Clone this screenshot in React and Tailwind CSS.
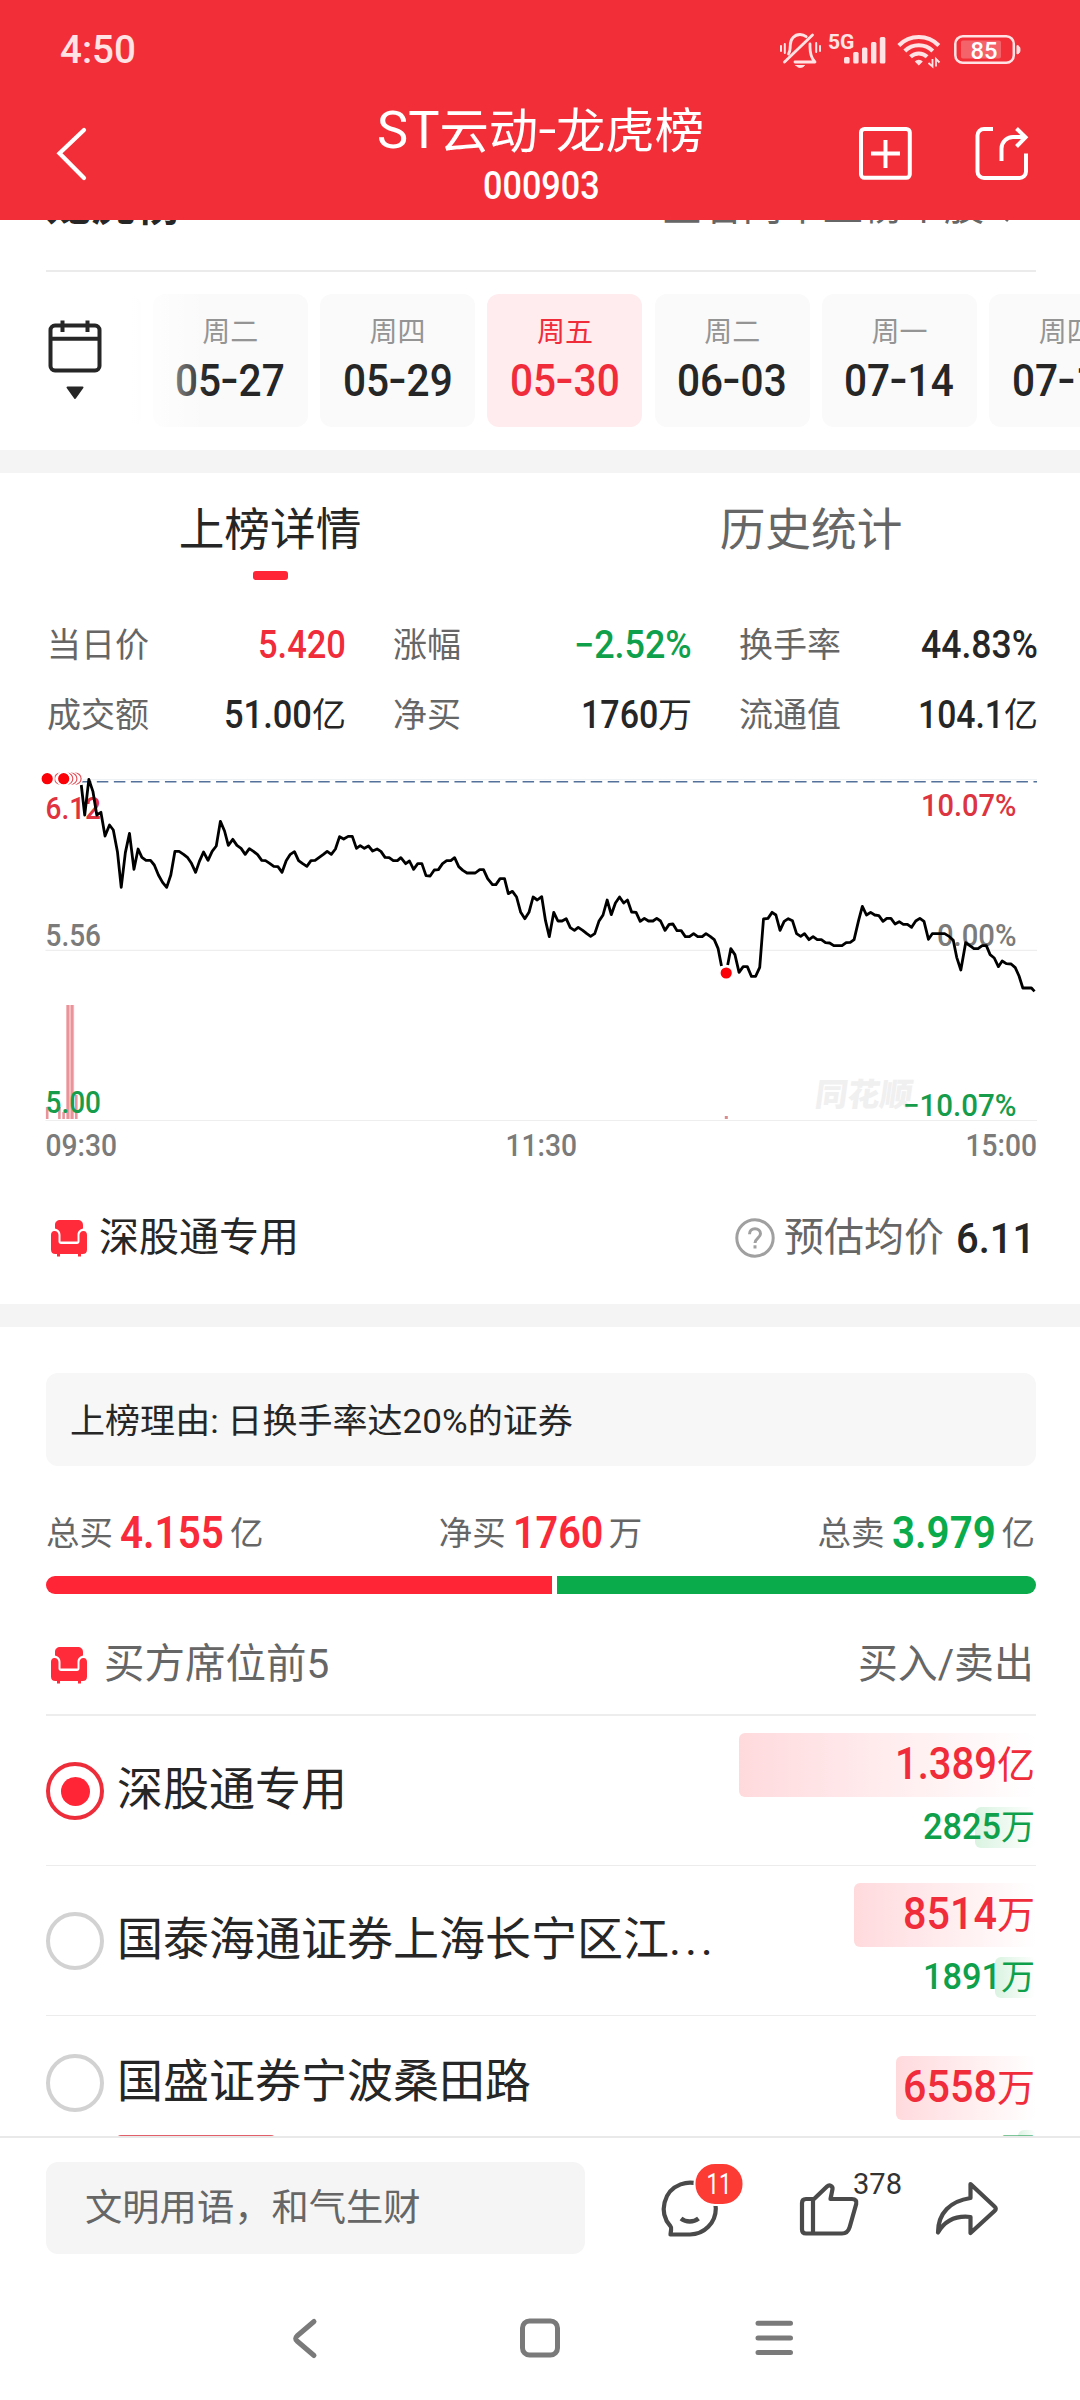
import { useLayoutEffect, useRef, useState } from "react";

/* Text squeezed or stretched horizontally so that it fills exactly w pixels. */
function Fit({ w, className = "", children }) {
  const ref = useRef(null);
  const [scale, setScale] = useState(1);
  useLayoutEffect(() => {
    setScale(w / ref.current.offsetWidth);
  }, [w]);
  return (
    <span className={"inline-block shrink-0 whitespace-nowrap " + className} style={{ width: w }}>
      <span ref={ref} className="inline-block origin-left" style={{ transform: `scaleX(${scale})` }}>
        {children}
      </span>
    </span>
  );
}

/* Hyphen raised and widened to sit at digit mid-height. */
function Dash() {
  return <span className="mx-[2px] inline-block -translate-y-[2px] scale-x-130">-</span>;
}

function StatusIcons() {
  return (
    <svg className="h-[40px] w-[250px]" viewBox="775 30 250 40" fill="none" stroke="#ffe3e4">
      <g strokeWidth="2.8" strokeLinecap="round" strokeLinejoin="round">
        <path d="M788.5 54c1.8-3 1.8-6 1.8-9 0-6 4.200-10.500 9.700-10.500 2.500 0 4.500.8 6.200 2.200" />
        <path d="M810 44v3c0 7 1 11 5 15h-20" />
        <path d="M812.500 35l-28 27" />
        <path d="M781 46v5M784.800 44v9M820 46v5M816.200 43v9" strokeWidth="2" />
        <path d="M796 65.500h8.500c-2 2.600-6.500 2.600-8.500 0z" fill="#ffe3e4" strokeWidth="1" />
      </g>
      <text x="828" y="48.500" fontFamily="Roboto, sans-serif" fontWeight="700" fontSize="20.500" fill="#ffe3e4" stroke="none" textLength="26.500" lengthAdjust="spacingAndGlyphs">5G</text>
      <g fill="#ffe3e4" stroke="none">
        <rect x="844" y="57" width="5.600" height="6.500" rx="1.500" />
        <rect x="853.200" y="52" width="5.400" height="11.500" rx="1.500" />
        <rect x="862" y="47.500" width="5.400" height="16" rx="1.500" />
        <rect x="871" y="42" width="5.400" height="21.500" rx="1.500" />
        <rect x="879.800" y="37" width="5.600" height="26.500" rx="1.500" />
      </g>
      <g strokeWidth="4">
        <path d="M898.800 45.500a28 28 0 0 1 40 0" />
        <path d="M904.800 51a20 20 0 0 1 28 0" />
        <path d="M910.500 56.800a12 12 0 0 1 16.600 0" />
      </g>
      <path d="M914.800 61.500a5.600 5.600 0 0 1 8 0l-4 4z" fill="#ffe3e4" stroke="none" />
      <path d="M932.500 59v7.500l-4-3.500M936 66.500V59l3.500 3.500" strokeWidth="1.800" />
      <rect x="955.300" y="36.300" width="58.500" height="26.500" rx="7.500" strokeWidth="2.500" />
      <rect x="961" y="40.500" width="40" height="18" rx="2" fill="#ffffff" fillOpacity=".25" stroke="none" />
      <path d="M1017 45.500c2.500.5 3 2 3 4.200s-.5 3.800-3 4.200z" fill="#ffe3e4" strokeWidth="1" />
      <text x="970.500" y="59" fontFamily="Roboto, sans-serif" fontWeight="500" fontSize="24.500" fill="#ffffff" stroke="none" textLength="27" lengthAdjust="spacingAndGlyphs">85</text>
    </svg>
  );
}

function Header() {
  return (
    <header className="h-[220px] shrink-0 bg-[#f22f38] text-white">
      <div className="flex h-[99px] items-center justify-between pl-[60px] pr-[55px] pt-[1px]">
        <Fit w={76} className="text-[38px] font-medium text-[#ffe3e4]">4:50</Fit>
        <StatusIcons />
      </div>
      <div className="grid h-[121px] grid-cols-[340px_1fr_340px]">
        <svg className="ml-[50px] mt-[24px] h-[60px] w-[44px]" viewBox="50 123 44 60" fill="none" stroke="#fff" strokeWidth="4.200" strokeLinecap="round">
          <path d="M84 130L59.500 153.300 84 178" />
        </svg>
        <div className="flex flex-col items-center pt-[4px]">
          <Fit w={327} className="text-[48px] font-normal leading-[56px]">
            <span className="text-[51px]">ST</span>云动<Dash />龙虎榜
          </Fit>
          <Fit w={117} className="ml-[2px] mt-[6px] text-[38px] font-medium leading-[40px]">000903</Fit>
        </div>
        <svg className="ml-[110px] mt-[24px] h-[60px] w-[190px]" viewBox="850 123 190 60" fill="none" stroke="#fff" strokeWidth="4">
          <rect x="861" y="129" width="48.800" height="48.800" rx="3.500" />
          <path d="M885.500 140v28M871 153.500h29" />
          <path d="M993 129h-9a6.500 6.500 0 0 0-6.500 6.500v36a6.500 6.500 0 0 0 6.500 6.500h35.500a6.500 6.500 0 0 0 6.500-6.500V153.500" />
          <path d="M1001.500 161v-12.500a11.500 11.500 0 0 1 11.500-11.500h12" />
          <path d="M1016.500 128.500l9 8.700-9 9.300" />
        </svg>
      </div>
    </header>
  );
}

const DATES = [
  { day: "周一", date: ["05", "26"] },
  { day: "周二", date: ["05", "27"] },
  { day: "周四", date: ["05", "29"] },
  { day: "周五", date: ["05", "30"], active: true },
  { day: "周二", date: ["06", "03"] },
  { day: "周一", date: ["07", "14"] },
  { day: "周四", date: ["07", "17"] },
];

function DateStrip() {
  return (
    <div className="flex h-[178px] items-start overflow-hidden">
      <svg className="z-10 mt-[42px] h-[90px] w-[60px] shrink-0 ml-[45px]" viewBox="45 314 60 90" fill="none" stroke="#262626" strokeWidth="4">
        <rect x="50.500" y="325.500" width="49" height="45" rx="4.500" />
        <path d="M50.500 338.700h49M62.500 320.500v11.500M87.500 320.500v11.500" />
        <path d="M67.500 387.500h15l-7.500 10.500z" fill="#262626" strokeWidth="2" strokeLinejoin="round" />
      </svg>
      <div className="relative mt-[22px] h-[133px] w-[975px] overflow-hidden">
        <div className="ml-[-119.500px] flex gap-[12.300px]">
          {DATES.map((d, i) => (
            <div
              key={i}
              className={
                "flex h-[133px] w-[155px] shrink-0 flex-col items-center rounded-[12px] pt-[22px] " +
                (d.active ? "bg-[#ffecee] text-[#f02b3a]" : "bg-[#fafafa] text-[#262626]")
              }
            >
              <span className={"text-[28px] leading-[33px] " + (d.active ? "" : "text-[#949494]")}>{d.day}</span>
              <Fit w={110} className="mt-[10px] text-[43.500px] font-medium leading-[45px]">
                {d.date[0]}<Dash />{d.date[1]}
              </Fit>
            </div>
          ))}
        </div>
        <div className="absolute left-0 top-0 h-full w-[102px] bg-gradient-to-r from-white from-25% to-transparent" />
      </div>
    </div>
  );
}

const STATS = [
  { label: "当日价", num: "5.420", w: 88, tone: "text-[#f02b3a]" },
  { label: "涨幅", num: "−2.52%", w: 118, tone: "text-[#0fa04c]" },
  { label: "换手率", num: "44.83%", w: 117, tone: "text-[#262626]" },
  { label: "成交额", num: "51.00", unit: "亿", w: 88, tone: "text-[#262626]" },
  { label: "净买", num: "1760", unit: "万", w: 77, tone: "text-[#262626]" },
  { label: "流通值", num: "104.1", unit: "亿", w: 86, tone: "text-[#262626]" },
];

function Stats() {
  return (
    <div className="mt-[31px] grid grid-cols-[300px_300px_300px] gap-x-[46px] pl-[46px]">
      {STATS.map((s) => (
        <div key={s.label} className="flex h-[70px] items-center justify-between">
          <span className="ml-[1px] text-[34px] text-[#666]">{s.label}</span>
          <span className={"flex items-center font-medium " + s.tone}>
            <Fit w={s.w} className="text-[38px]">{s.num}</Fit>
            {s.unit && <span className="text-[34px] font-normal">{s.unit}</span>}
          </span>
        </div>
      ))}
    </div>
  );
}

/* Intraday price polyline on a 3136 x 1290 grid, in two runs around the marked trade. */
const LINE_A =
  "236,105 246,195 258,88 270,125 281,195 293,187 305,258 318,225 329,240 341,305 352,412 364,308 376,250 389,358 401,297 412,322 424,331 437,331 448,345 460,375 472,397 484,412 496,375 508,304 520,304 533,313 545,323 556,340 568,367 579,334 591,306 604,331 616,304 628,288 640,214 652,243 663,286 676,268 688,286 700,295 712,313 724,296 736,304 748,314 760,331 771,332 783,340 795,349 807,350 819,367 831,332 843,313 855,305 867,332 879,341 891,349 903,332 915,331 927,322 939,313 950,304 962,313 974,297 986,260 998,267 1011,259 1023,259 1035,295 1046,287 1058,295 1070,288 1082,303 1095,297 1106,304 1118,322 1130,323 1142,332 1154,332 1164,323 1178,341 1189,333 1201,358 1213,341 1225,341 1237,377 1249,378 1261,360 1273,359 1285,341 1297,332 1309,332 1320,323 1332,350 1344,361 1356,369 1380,369 1393,359 1404,359 1416,386 1430,404 1440,404 1452,386 1465,386 1476,431 1488,424 1500,441 1512,487 1524,506 1536,487 1548,441 1560,450 1573,440 1584,512 1595,560 1608,487 1620,513 1632,513 1644,506 1656,533 1668,541 1679,532 1692,541 1704,551 1715,559 1727,551 1739,514 1751,495 1763,450 1775,494 1787,459 1799,441 1811,459 1822,450 1834,486 1847,487 1859,514 1871,505 1883,513 1896,513 1907,505 1918,513 1931,541 1943,523 1954,522 1966,542 1978,542 1990,560 2002,560 2014,551 2026,560 2039,560 2050,551 2062,559 2074,569 2085,595 2095,648";
const LINE_B =
  "2113,645 2122,596 2134,614 2146,667 2158,650 2170,650 2182,679 2194,679 2206,652 2217,507 2230,505 2242,487 2253,495 2265,541 2277,514 2289,506 2301,512 2313,551 2325,559 2336,551 2349,569 2361,560 2373,569 2385,569 2397,578 2409,579 2421,587 2445,587 2457,578 2469,577 2480,569 2493,512 2504,469 2516,495 2528,487 2540,495 2552,497 2564,514 2575,505 2587,505 2599,522 2611,515 2623,523 2635,523 2647,532 2659,513 2671,505 2683,514 2696,568 2707,551 2743,551 2757,560 2768,571 2778,622 2790,660 2804,578 2816,587 2828,596 2840,596 2852,587 2864,587 2875,614 2887,624 2899,650 2910,633 2922,641 2936,642 2948,653 2959,678 2970,714 2995,714 3004,724";

const BARS = [
  [47.2, 1107], [59.4, 1107], [63.6, 1112], [67.900, 1005], [72.100, 1005], [76.300, 1095],
];

const LABELS = [
  { t: "5.56", x: 45.500, y: 945.500, w: 55.500, fill: "#7b7b7b" },
  { t: "5.00", x: 45.500, y: 1112.500, w: 55.500, fill: "#179c4c" },
  { t: "6.12", x: 45.500, y: 819, w: 55.500, fill: "#e0323f" },
  { t: "10.07%", x: 921, y: 816, w: 95.500, fill: "#dc3440" },
  { t: "0.00%", x: 937, y: 945.500, w: 79.500, fill: "#7b7b7b" },
  { t: "−10.07%", x: 903, y: 1116, w: 113.500, fill: "#179c4c" },
  { t: "09:30", x: 45.500, y: 1155.500, w: 71.500, fill: "#7b7b7b" },
  { t: "11:30", x: 505.500, y: 1155.500, w: 71.500, fill: "#7b7b7b" },
  { t: "15:00", x: 965.500, y: 1155.500, w: 71.500, fill: "#7b7b7b" },
];

function Chart() {
  return (
    <svg className="block h-[430px] w-[1080px]" viewBox="0 750 1080 430">
      <path d="M45.500 779.700H1037" stroke="#eceff3" strokeWidth="1" />
      <path d="M45.500 950.300H1037M45.500 1120.500H1037" stroke="#eeeeee" strokeWidth="1.200" />
      <path d="M79.800 781.700H1037" stroke="#54719c" strokeWidth="1.500" strokeDasharray="11.500 5.530" />
      <rect x="66.200" y="1005" width="8" height="114" fill="#fbc6ca" />
      {BARS.map(([x, y]) => (
        <rect key={x} x={x - 1.3} y={y} width="2.600" height={1119 - y} fill="#e8949a" />
      ))}
      <rect x="724.800" y="1116" width="3" height="3" fill="#d98d8d" />
      <text x="814" y="1106" transform="translate(814 1106) skewX(-8) translate(-814 -1106)" fontFamily="'Noto Sans CJK SC', sans-serif" fontWeight="900" fontSize="32" fill="#f0f0f0" textLength="97" lengthAdjust="spacingAndGlyphs">同花顺</text>
      {LABELS.map((l) => (
        <text key={l.t} x={l.x} y={l.y} fontFamily="Roboto, sans-serif" fontWeight="500" fontSize="30.500" fill={l.fill} textLength={l.w} lengthAdjust="spacingAndGlyphs">{l.t}</text>
      ))}
      <svg x="0" y="750" width="1080" height="430" viewBox="0 0 3136 1290" preserveAspectRatio="none" fill="none" stroke="#000" strokeWidth="2.800" strokeLinejoin="round">
        <polyline points={LINE_A} vectorEffect="non-scaling-stroke" />
        <polyline points={LINE_B} vectorEffect="non-scaling-stroke" />
      </svg>
      <g stroke="#e8505a" strokeWidth="1.200">
        {[75.5, 71.3, 67.2, 60.2].map((x) => (
          <g key={x}>
            <circle cx={x} cy="778.700" r="7.500" fill="#fff" stroke="none" />
            <circle cx={x} cy="778.700" r="5.600" fill="#fff" />
          </g>
        ))}
      </g>
      <g fill="#fa0207" stroke="#fff" strokeWidth="2">
        <circle cx="63.700" cy="778.700" r="6.600" />
        <circle cx="47.200" cy="778.700" r="6.600" />
        <circle cx="726.200" cy="973" r="6.600" />
      </g>
    </svg>
  );
}

function Sofa() {
  return (
    <svg className="h-[38px] w-[38px] shrink-0" viewBox="0 0 38 38" fill="#ff2a3a">
      <path d="M10.500 1h17c3.500 0 5.500 2 5.500 5v3.500c-4 1-5.500 3.500-5.500 6.500v6.500h-17V16c0-3-1.500-5.500-5.500-6.500V6c0-3 2-5 5.500-5z" />
      <path d="M4.500 12C7 12 8.500 13.800 8.500 16v6.500c0 1.500 1 2.500 2.500 2.500h16c1.500 0 2.500-1 2.500-2.500V16c0-2.200 1.500-4 4-4S37 13.800 37 16v14.500c0 3-1.500 4.500-4.500 4.500H31v2.500h-3V35H10v2.500H7V35H5.500C2.500 35 1 33.500 1 30.500V16c0-2.200 1-4 3.500-4z" />
    </svg>
  );
}

function SeatSummary() {
  return (
    <div className="flex h-[116px] items-center justify-between pl-[50px] pr-[45px]">
      <div className="flex items-center gap-[11px]">
        <Sofa />
        <span className="text-[40px] text-[#262626]">深股通专用</span>
      </div>
      <div className="flex items-center">
        <svg className="mr-[8px] h-[42px] w-[42px]" viewBox="0 0 42 42" fill="none" stroke="#a0a0a0" strokeWidth="3">
          <circle cx="21" cy="21" r="18.200" />
          <path d="M15.500 17.200c0-3.400 2.400-5.500 5.500-5.500s5.500 2 5.500 5c0 4.200-5.500 4.600-5.500 9.300" />
          <path d="M21 28.300v3.200" />
        </svg>
        <span className="text-[40px] text-[#666]">预估均价</span>
        <Fit w={79} className="ml-[12px] text-[43px] font-medium text-[#262626]">6.11</Fit>
      </div>
    </div>
  );
}

function Total({ label, num, w, unit, tone }) {
  return (
    <div className="flex items-center text-[33.500px] text-[#666]">
      <span>{label}</span>
      <Fit w={w} className={"ml-[7px] mr-[6px] text-[43.500px] font-semibold " + tone}>{num}</Fit>
      <span>{unit}</span>
    </div>
  );
}

const SEATS = [
  { name: "深股通专用", on: true, buy: "1.389", buyUnit: "亿", buyW: 102, buyBar: 297, sell: "2825", sellW: 78, sellBar: 61 },
  { name: "国泰海通证券上海长宁区江", cut: true, buy: "8514", buyUnit: "万", buyW: 94, buyBar: 182, sell: "1891", sellW: 78, sellBar: 41 },
  { name: "国盛证券宁波桑田路", buy: "6558", buyUnit: "万", buyW: 94, buyBar: 140, sell: "1515", sellW: 81, sellBar: 18, tag: true },
];

function Seat({ s }) {
  return (
    <div className={"ml-[46px] mr-[44px] flex items-start justify-between border-b border-[#ececec] " + (s.tag ? "h-[196px] pt-[40px]" : "h-[150px] pt-[17px]")}>
      <div className={"flex items-start " + (s.tag ? "-mt-[2px]" : "mt-[29px]")}>
        <span className={"flex h-[58px] w-[58px] items-center justify-center rounded-full " + (s.on ? "border-[4px] border-[#ee2d3b]" : "border-[4px] border-[#d2d2d2]")}>
          {s.on && <span className="h-[29px] w-[29px] rounded-full bg-[#ff2436]" />}
        </span>
        <div className="ml-[13px] flex flex-col">
          <span className="h-[58px] whitespace-nowrap text-[46px] leading-[54px] text-[#262626]">
            {s.name}
            {s.cut && <span className="tracking-[3.800px]">...</span>}
          </span>
          {s.tag && <span className="mt-[23px] h-[40px] w-[158px] rounded-[4px] border border-t-2 border-[#e2606a]" />}
        </div>
      </div>
      <div className="flex w-[300px] flex-col items-end">
        <div className="relative flex h-[64px] w-full items-center justify-end pr-[1px] text-[#f02b3a]">
          <span className="absolute right-0 top-0 h-full rounded-[6px] bg-gradient-to-r from-[#ffdadd] to-white" style={{ width: s.buyBar }} />
          <Fit w={s.buyW} className="relative text-[43.500px] font-medium">{s.buy}</Fit>
          <span className="relative text-[38px]">{s.buyUnit}</span>
        </div>
        <div className="relative mt-[10px] flex h-[41px] w-full items-center justify-end pb-[2px] pr-[1px] text-[#0fa04c]">
          <span className="absolute right-0 top-0 h-full rounded-[6px] bg-gradient-to-r from-[#daf3e1] to-white" style={{ width: s.sellBar }} />
          <Fit w={s.sellW} className="relative text-[37px] font-medium">{s.sell}</Fit>
          <span className="relative text-[34px]">万</span>
        </div>
      </div>
    </div>
  );
}

function BottomBar() {
  return (
    <footer className="h-[264px] shrink-0 border-t-2 border-[#e9e9e9] bg-white">
      <div className="flex h-[140px] items-center pl-[46px]">
        <div className="flex h-[92px] w-[539px] items-center rounded-[12px] bg-[#f5f5f5] pl-[39px] pt-[2px] text-[37.300px] text-[#666]">文明用语，和气生财</div>
        <svg className="mb-[6px] ml-[65px] h-[90px] w-[380px]" viewBox="650 2160 380 90" fill="none" stroke="#4a4a4a" strokeWidth="4.200" strokeLinecap="round" strokeLinejoin="round">
          <path d="M670.500 2234.500h19.500a26 26 0 0 0 25.800-26 26 26 0 1 0-45.600 17.300c1.300 1.600 1.300 2.300.9 4z" />
          <path d="M681 2218.500c5 4 12.500 4 17.500 0" strokeWidth="4.500" strokeLinecap="butt" />
          <rect x="694.500" y="2163" width="49" height="42" rx="20.500" fill="#fb3b34" stroke="#fff" strokeWidth="2" />
          <text x="706.500" y="2194" fontFamily="Roboto, sans-serif" fontSize="30" fill="#fff" stroke="none" textLength="25" lengthAdjust="spacingAndGlyphs">11</text>
          <path d="M806 2199h8l13-12.500c2.500-2.300 6-.5 5.500 2.700l-2 9.800h21.500c3.500 0 5 2 4.200 5l-6.500 23c-1.200 4-3.500 6.500-7.700 6.500h-36c-2.500 0-4-1.500-4-4v-26.500c0-2.500 1.500-4 4-4zM813 2199.500v33.500" />
          <text x="853" y="2193.500" fontFamily="Roboto, sans-serif" fontSize="30" fill="#333" stroke="none" textLength="49" lengthAdjust="spacingAndGlyphs">378</text>
          <path d="M970.500 2184l24 22.500c1.700 1.600 1.700 2.900 0 4.500l-24 22v-16c-14-1.500-25.500 3.500-32.500 15.500 0-19.500 12.500-31.500 32.500-34.500z" />
        </svg>
      </div>
      <div className="flex h-[122px] items-center justify-center pb-[2px]">
        <svg className="h-[50px] w-[520px]" viewBox="280 2313 520 50" fill="none" stroke="#7a7a7a" strokeWidth="5" strokeLinecap="round" strokeLinejoin="round">
          <path d="M314 2321.500l-17 14.500c-1.800 1.700-1.800 3.300 0 5l17 14.500" />
          <rect x="522.500" y="2321" width="35" height="34" rx="7" />
          <path d="M758 2323.300h32.500M758 2338h32.500M758 2352.500h32.500" />
        </svg>
      </div>
    </footer>
  );
}

export default function App() {
  return (
    <div className="flex h-[2400px] w-[1080px] flex-col overflow-hidden bg-white font-[Roboto,'Noto_Sans_CJK_SC',sans-serif] leading-none">
      <Header />
      <main className="h-[1916px] shrink-0 overflow-hidden">
        <div className="ml-[46px] mr-[44px] flex h-[52px] items-start justify-between border-b-2 border-[#ebebeb]">
          <span className="mt-[-37px] text-[45px] font-semibold text-[#262626]">龙虎榜</span>
          <span className="-mt-[33px] flex items-center text-[40.300px] text-[#666]">
            查看两市上榜个股
            <svg className="ml-[19px] mr-[17px] mt-[4px] h-[26px] w-[16px]" viewBox="0 0 16 26" fill="none" stroke="#666" strokeWidth="3"><path d="M3 1l10 12L3 25" /></svg>
          </span>
        </div>
        <DateStrip />
        <div className="h-[23px] bg-[#f4f4f4]" />
        <div className="flex h-[106px] justify-around pt-[34px] text-[45.700px]">
          <div className="flex w-1/2 flex-col items-center">
            <span className="leading-[48px] text-[#262626]">上榜详情</span>
            <span className="mt-[16px] h-[9px] w-[35px] shrink-0 rounded-[3px] bg-[#ff2436]" />
          </div>
          <div className="w-1/2 pl-[2px] text-center leading-[48px] text-[#666]">历史统计</div>
        </div>
        <Stats />
        <Chart />
        <SeatSummary />
        <div className="mt-[8px] h-[23px] bg-[#f4f4f4]" />
        <div className="ml-[46px] mr-[44px] mt-[46px] flex h-[93px] items-center rounded-[12px] bg-[#f7f7f7] pl-[24px] pt-[3px] text-[#262626]">
          <Fit w={503} className="text-[34px]">上榜理由: 日换手率达20%的证券</Fit>
        </div>
        <div className="mt-[45px] flex h-[46px] items-center justify-between pl-[46px] pr-[45px]">
          <Total label="总买" num="4.155" w={104} unit="亿" tone="text-[#f92b3b]" />
          <Total label="净买" num="1760" w={90} unit="万" tone="text-[#f92b3b]" />
          <Total label="总卖" num="3.979" w={104} unit="亿" tone="text-[#09ab4b]" />
        </div>
        <div className="ml-[46px] mr-[44px] mt-[19px] flex h-[18px] gap-[5px] overflow-hidden rounded-full">
          <div className="w-[506px] bg-[#ff2436]" />
          <div className="flex-1 bg-[#09ab4b]" />
        </div>
        <div className="ml-[46px] mr-[44px] flex h-[122px] items-center justify-between border-b-2 border-[#ededed] pt-[21px] text-[40.500px] text-[#666]">
          <div className="flex items-center gap-[16px] pl-[4px]">
            <Sofa />
            <span>买方席位前5</span>
          </div>
          <Fit w={176} className="mr-[2px]">买入/卖出</Fit>
        </div>
        {SEATS.map((s) => (
          <Seat key={s.name} s={s} />
        ))}
      </main>
      <BottomBar />
    </div>
  );
}
